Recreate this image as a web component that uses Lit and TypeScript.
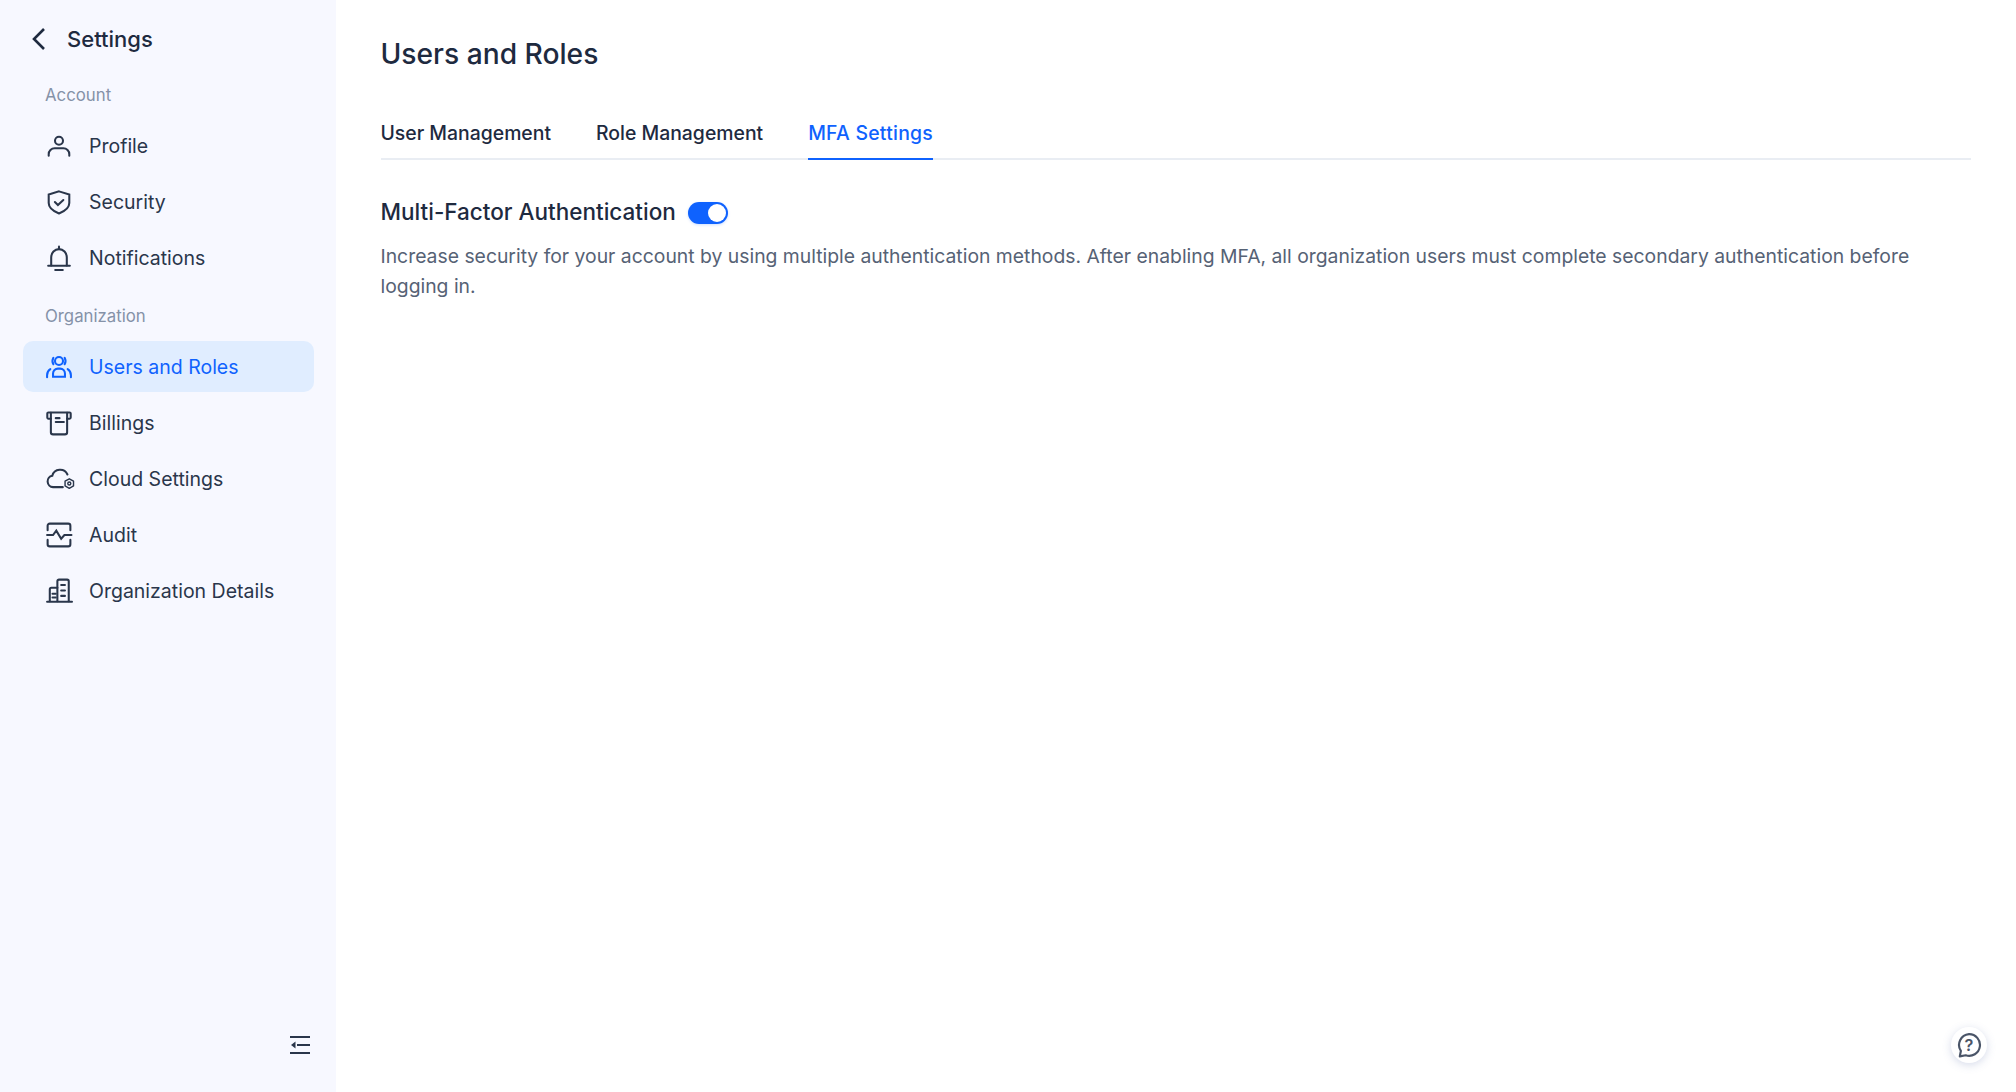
import { LitElement, html, css, svg, TemplateResult } from 'lit';
import { customElement, state } from 'lit/decorators.js';
import { classMap } from 'lit/directives/class-map.js';

const icons: Record<string, TemplateResult> = {
  profile: svg`<circle cx="12" cy="7.200" r="3.700"/><path d="M2.500 21v-1.500A5.500 5.500 0 0 1 8 14h8a5.500 5.500 0 0 1 5.500 5.500V21"/>`,
  security: svg`<path d="M12 2.200 21.500 5v8c0 4.800-4.200 7.600-9.500 9.600C6.700 20.600 2.500 17.800 2.500 13V5Z"/><path d="m8.200 12 2.800 2.800 5-4.600"/>`,
  bell: svg`<path d="M12 1.500v2.300"/><path d="M4.800 19V11.500a7.200 7.700 0 0 1 14.400 0V19"/><path d="M2 19.200h20"/><path d="M8.500 23h7"/>`,
  users: svg`<circle cx="12" cy="6.500" r="3.700"/><path d="M6.800 3.500a6 6 0 0 0 0 6M17.200 3.500a6 6 0 0 1 0 6"/><path d="M6.500 21v-3A4.500 4.500 0 0 1 11 13.500h2a4.500 4.500 0 0 1 4.500 4.500v3Z"/><path d="M1 21.500v-2a6.500 6.500 0 0 1 3-5.500M23 21.500v-2a6.500 6.500 0 0 0-3-5.500"/>`,
  billing: svg`<path d="M4.500 8H2.200A1 1 0 0 1 1.200 7V3.300a1 1 0 0 1 1-1h19.600a1 1 0 0 1 1 1V7a1 1 0 0 1-1 1h-2.300"/><path d="M4.500 2.500V20.500a2 2 0 0 0 2 2h11a2 2 0 0 0 2-2V2.500"/><path d="M9 7.500h3.500M9 11h7.500"/>`,
  cloud: svg`<path d="M15.500 19.500H6.500A5.300 5.300 0 0 1 5.800 9 7.500 7.500 0 0 1 19.800 7.800"/><path class="thin" d="M21.500 11.800 25.400 14v4.400l-3.900 2.200-3.900-2.200V14Z" stroke-linejoin="round"/><circle class="thin" cx="21.500" cy="16.200" r="1.400"/>`,
  audit: svg`<path d="M1.500 7.500V3.500a2 2 0 0 1 2-2h17a2 2 0 0 1 2 2v4"/><path d="M1.500 16.500v4a2 2 0 0 0 2 2h17a2 2 0 0 0 2-2v-4"/><path d="M1 12h5.500l3-4 4.500 7.500 3-3.500h6.500"/>`,
  org: svg`<path d="M10.500 21.500V3a1.500 1.500 0 0 1 1.500-1.500h7.500A1.500 1.500 0 0 1 21 3v18.500"/><path d="M10.500 9H5a1.500 1.500 0 0 0-1.500 1.500v11"/><path d="M1 22h23"/><path d="M14 6.500h3.500M14 11.500h3.500M14 16.500h3.500M6 14.500h3M6 18h3"/>`,
};

interface NavItem {
  label: string;
  icon: string;
  active?: boolean;
}

const accountItems: NavItem[] = [
  { label: 'Profile', icon: 'profile' },
  { label: 'Security', icon: 'security' },
  { label: 'Notifications', icon: 'bell' },
];

const orgItems: NavItem[] = [
  { label: 'Users and Roles', icon: 'users', active: true },
  { label: 'Billings', icon: 'billing' },
  { label: 'Cloud Settings', icon: 'cloud' },
  { label: 'Audit', icon: 'audit' },
  { label: 'Organization Details', icon: 'org' },
];

@customElement('app-root')
export class AppRoot extends LitElement {
  @state() mfaEnabled = true;

  static styles = css`
    :host {
      display: flex;
      height: 1092px;
      font-family: Inter, 'Noto Sans', sans-serif;
      color: #1e2a3f;
      background: #fff;
      overflow: hidden;
    }
    .sidebar {
      width: 336px;
      flex: none;
      display: flex;
      flex-direction: column;
      background: #f7f8ff;
      padding: 0 22px 0 23px;
      box-sizing: border-box;
    }
    .back {
      display: flex;
      align-items: center;
      height: 78px;
      gap: 16px;
      padding-left: 6px;
      font-size: 22px;
      font-weight: 500;
    }
    .back svg {
      width: 22px;
      height: 26px;
      fill: none;
      stroke: #1e2a3f;
      stroke-width: 2.6;
    }
    .group {
      height: 34px;
      display: flex;
      align-items: center;
      padding-left: 22px;
      font-size: 16.8px;
      color: #8592a8;
    }
    .group.first {
      margin-bottom: 8px;
    }
    .group.second {
      margin-top: 11px;
      margin-bottom: 8px;
    }
    .item {
      display: flex;
      align-items: center;
      height: 51px;
      margin-bottom: 5px;
      padding-left: 23px;
      gap: 17px;
      border-radius: 10px;
      font-size: 19.5px;
      color: #2a364b;
    }
    .item.active {
      background: #e0edff;
      color: #0f62fe;
    }
    .item svg {
      width: 26px;
      height: 26px;
      flex: none;
      fill: none;
      stroke: currentColor;
      stroke-width: 1.9;
      stroke-linecap: round;
      overflow: visible;
    }
    .item svg .thin {
      stroke-width: 1.3;
    }
    .item:not(.active) svg {
      stroke: #2a364b;
    }
    .spacer {
      flex: 1;
    }
    .collapse {
      display: flex;
      justify-content: flex-end;
      padding: 0 4px 38px 0;
    }
    .collapse svg {
      width: 20px;
      height: 18px;
      stroke: #2a364b;
      stroke-width: 2;
      fill: #2a364b;
    }
    .main {
      flex: 1;
      padding: 0 45px 0 44.500px;
      min-width: 0;
    }
    h1 {
      margin: 0;
      height: 106px;
      box-sizing: border-box;
      padding-top: 2px;
      display: flex;
      align-items: center;
      font-size: 28.2px;
      font-weight: 500;
    }
    .tabs {
      display: flex;
      gap: 45px;
      box-sizing: border-box;
      border-bottom: 2px solid #e9edf3;
      height: 54px;
    }
    .tab {
      height: 54px;
      box-sizing: border-box;
      display: flex;
      align-items: center;
      padding-top: 2px;
      border-bottom: 2px solid transparent;
      font-size: 19.4px;
      font-weight: 500;
      color: #1e2a3f;
    }
    .tab.active {
      color: #0f62fe;
      letter-spacing: 0.25px;
      border-bottom-color: #0f62fe;
    }
    .heading {
      display: flex;
      align-items: center;
      gap: 12px;
      margin-top: 35px;
      height: 32px;
      font-size: 22.5px;
      font-weight: 500;
    }
    .toggle {
      width: 40px;
      height: 22px;
      margin-top: 3px;
      border-radius: 11px;
      background: #0f62fe;
      position: relative;
      box-shadow: 0 1px 3px rgba(15, 98, 254, 0.2);
    }
    .toggle::after {
      content: '';
      position: absolute;
      right: 2px;
      top: 2px;
      width: 18px;
      height: 18px;
      border-radius: 50%;
      background: #fff;
    }
    .desc {
      margin: 14px 0 0;
      font-size: 19.35px;
      line-height: 30px;
      color: #566275;
    }
    .help {
      position: absolute;
      right: 29px;
      bottom: 29px;
      width: 36px;
      height: 36px;
      border-radius: 50%;
      background: #fff;
      box-shadow: 0 2px 8px rgba(90, 110, 170, 0.25);
      display: flex;
      align-items: center;
      justify-content: center;
    }
    .help svg {
      width: 26px;
      height: 26px;
      fill: none;
      stroke: #4a5568;
      stroke-width: 2;
    }
    .help text {
      font-size: 15px;
      font-weight: 600;
      fill: #4a5568;
      stroke: none;
      text-anchor: middle;
    }
  `;

  renderItem(item: NavItem) {
    return html`
      <div class=${classMap({ item: true, active: !!item.active })}>
        <svg viewBox="0 0 24 24">${icons[item.icon]}</svg>
        <span>${item.label}</span>
      </div>
    `;
  }

  render() {
    return html`
      <aside class="sidebar">
        <div class="back">
          <svg viewBox="0 0 22 26"><path d="M15 3 5 13l10 10"/></svg>
          <span>Settings</span>
        </div>
        <div class="group first">Account</div>
        ${accountItems.map((i) => this.renderItem(i))}
        <div class="group second">Organization</div>
        ${orgItems.map((i) => this.renderItem(i))}
        <div class="spacer"></div>
        <div class="collapse">
          <svg viewBox="0 0 20 18"><path d="M0 1h20M7 9h13M0 17h20" fill="none"/><path d="M1 9l4.500-3.500v7Z" stroke="none"/></svg>
        </div>
      </aside>
      <main class="main">
        <h1>Users and Roles</h1>
        <div class="tabs">
          <div class="tab">User Management</div>
          <div class="tab">Role Management</div>
          <div class="tab active">MFA Settings</div>
        </div>
        <div class="heading">
          <span>Multi-Factor Authentication</span>
          <div class="toggle"></div>
        </div>
        <p class="desc">Increase security for your account by using multiple authentication methods. After enabling MFA, all organization users must complete secondary authentication before logging in.</p>
      </main>
      <div class="help">
        <svg viewBox="0 0 24 24">
          <path d="M12 2a10 10 0 1 1-3 19.500l-5.500 1 1-5A10 10 0 0 1 12 2Z" stroke-linejoin="round"/>
          <text x="12" y="17.500">?</text>
        </svg>
      </div>
    `;
  }
}
